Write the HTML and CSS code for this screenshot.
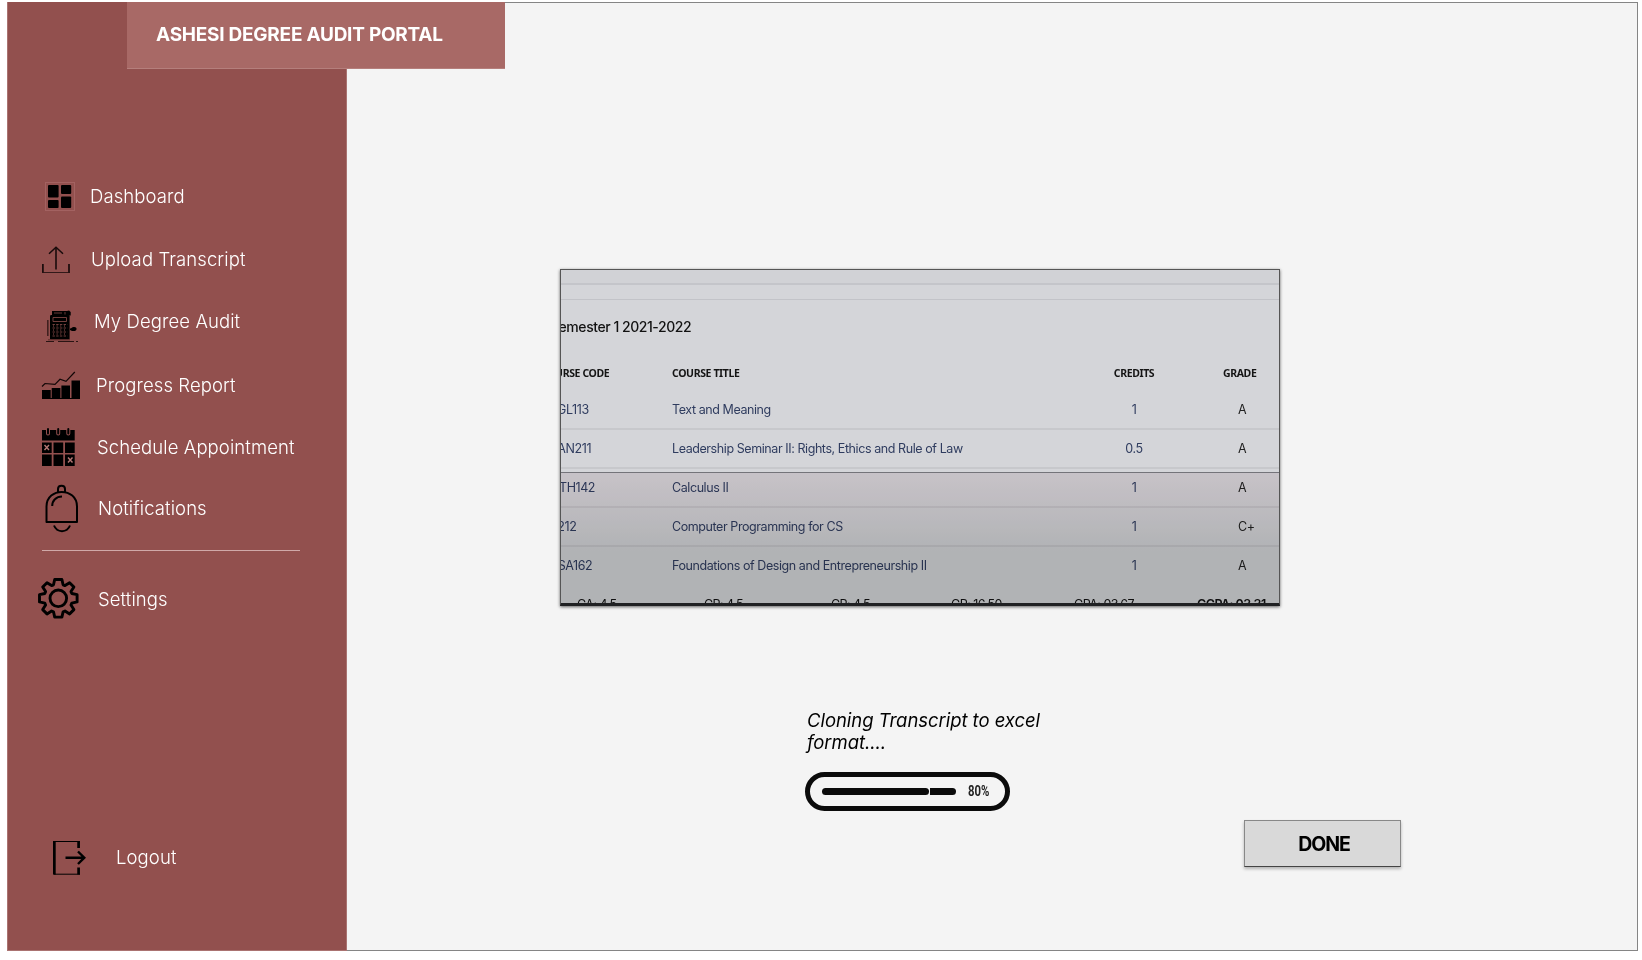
FILE: index.html
```html
<!DOCTYPE html>
<html lang="en">
<head>
<meta charset="utf-8">
<title>Ashesi Degree Audit Portal</title>
<link rel="stylesheet" href="styles.css">
</head>
<body>
<div class="frame">
  <header class="banner">ASHESI DEGREE AUDIT PORTAL</header>
  <nav class="sidebar">
    <a class="item dashboard"><svg viewBox="7 165 83 62"><rect x="45.5" y="182.5" width="29" height="28" fill="none" stroke="#a36261"/><rect x="48" y="185" width="10.6" height="12.6" rx="1"/><rect x="61" y="185" width="10.2" height="9" rx="1"/><rect x="48" y="200" width="10.6" height="8" rx="1"/><rect x="61" y="196.6" width="10.2" height="11.4" rx="1"/></svg><span>Dashboard</span></a>
    <a class="item upload"><svg viewBox="7 227 84 63"><g fill="none" stroke="#190b0b"><path d="M42.9 264v8.5M69 264v8.5" stroke-width="1.7"/><path d="M42 272.5h28" stroke-width=".8"/><path d="M56 247.500v22" stroke-width="1.6"/><path d="m49 253.800 7-6.500 7 6.500" stroke-width="1.5"/></g></svg><span>Upload Transcript</span></a>
    <a class="item audit"><svg viewBox="7 290 87 62"><path d="M52 311h15l2-.5 1.700 1.500v3.500H52z"/><path d="M54 313h8M65 312v2.500" stroke="#92504e" stroke-width=".7"/><rect x="50" y="315" width="19.600" height="24.500" rx="1.200"/><g fill="none" stroke="#7d4543" stroke-width=".9"><path d="M53 317.500h13.500v4H53z"/><path d="M52.500 324.500h15M52.500 328h15M52.500 332h15M52.500 336h15" stroke-dasharray="2.400 1.300"/><path d="M53 326h14M53 330h14M53 334h14" stroke-dasharray=".8 2.900" stroke-width="1.500"/></g><path d="M47.800 320v16" stroke="#41201f" stroke-width="1.600"/><path d="M70 328.500c2 0 2-2 4-1.500 3-.3 3.500 3 1 4h-3l-2-1z"/><path d="M48 339.800h22" stroke="#63302f" stroke-width="1.200"/><path d="M46 341.500h8m4 0h16m2 0h2" stroke="#2a1413"/></svg><span>My Degree Audit</span></a>
    <a class="item progress-link"><svg viewBox="7 352 89 64"><path d="M42 390h8.700v8h1V388h8.700v10h1v-12.500H70V398h1.500v-17.500H80V399H42z"/><path d="m42 386.500 3-3 10 .8 5-5 6 2 8.800-9.300" fill="none" stroke="#120707" stroke-width="1.200"/></svg><span>Progress Report</span></a>
    <a class="item schedule"><svg viewBox="7 416 90 61"><path d="M42 430h32.700v10.500H42zM42 442.500h9.700V453H42zM53.500 442.500h9.700V453h-9.700zM65 442.500h9.700V453H65zM42 454.500h9.700V466H42zM53.500 454.500h9.700V466h-9.700zM65 454.500h9.700V466H65z"/><path d="M48 428v5.500M58.200 428v5.500M68.300 428v5.500" stroke="#92504e" stroke-width="4" stroke-linecap="round"/><path d="M48 429v4.500M58.200 429v4.500M68.300 429v4.500" stroke="#000" stroke-width="2" stroke-linecap="round"/><path d="m44.500 445 4.500 5m0-5-4.500 5M68 457.500l4.500 5m0-5-4.500 5" stroke="#b57875" stroke-width="1.400"/></svg><span>Schedule Appointment</span></a>
    <a class="item notify"><svg viewBox="7 477 91 62"><g fill="none" stroke="#000" stroke-width="2"><path d="M46.500 522v-15.500c0-19.500 30.500-19.500 30.500 0V522z" stroke-linejoin="round"/><path d="M58 492v-3c0-4.500 7-4.500 7 0v3M52.200 506c0-5.500 4-9.500 9.800-9.500M54 525.500c3 7.500 13 7.500 16 0"/></g></svg><span>Notifications</span></a>
    <hr class="rule">
    <a class="item settings"><svg viewBox="7 568 91 60"><g transform="translate(58.300 598.300)" fill="none" stroke="#000" stroke-width="2.900" stroke-linejoin="round"><circle r="8.300"/><path d="M-3.600-18.800H3.600L4.800-13.500L6.700-12.700L11.300-15.600L15.600-11.300L12.700-6.700L13.500-4.800L18.800-3.600V3.600L13.500 4.800L12.700 6.700L15.600 11.300L11.300 15.600L6.700 12.700L4.800 13.500L3.600 18.800H-3.600L-4.800 13.500L-6.700 12.700L-11.300 15.600L-15.600 11.300L-12.700 6.700L-13.500 4.800L-18.800 3.600V-3.600L-13.500-4.800L-12.700-6.700L-15.600-11.300L-11.300-15.600L-6.700-12.700L-4.800-13.500Z"/></g></svg><span>Settings</span></a>
    <a class="item logout"><svg viewBox="7 826 109 60"><path d="M53 840h2.700v33.600H53z"/><g fill="none" stroke="#000"><path d="M54 840.500h26M54 873.200h26" stroke-width="1"/><path d="M78.600 840v7M78.600 866.500v7" stroke-width="2.700"/><path d="M65.500 856.700H84M78 850.500l6.300 6.200-6.300 6.300" stroke-width="2.400"/></g></svg><span>Logout</span></a>
  </nav>
  <main class="content">
    <section class="transcript">
      <div class="sheet">
        <div class="strip"></div>
        <div class="strip second"></div>
        <h2 class="term">Semester 1 2021-2022</h2>
        <div class="row head"><span>COURSE CODE</span><span>COURSE TITLE</span><span class="num">CREDITS</span><span class="gh">GRADE</span></div>
        <div class="row"><span>ENGL113</span><span>Text and Meaning</span><span class="num">1</span><span class="grade">A</span></div>
        <div class="row"><span>SOAN211</span><span>Leadership Seminar II: Rights, Ethics and Rule of Law</span><span class="num">0.5</span><span class="grade">A</span></div>
        <div class="row"><span>MATH142</span><span>Calculus II</span><span class="num">1</span><span class="grade">A</span></div>
        <div class="row"><span>CS212</span><span>Computer Programming for CS</span><span class="num">1</span><span class="grade">C+</span></div>
        <div class="row last"><span>BUSA162</span><span>Foundations of Design and Entrepreneurship II</span><span class="num">1</span><span class="grade">A</span></div>
        <div class="totals"><span>CA: 4.5</span><span>CP: 4.5</span><span>CP: 4.5</span><span>GP: 16.50</span><span>GPA: 03.67</span><b>CGPA: 03.31</b></div>
      </div>
      <div class="scan"></div>
    </section>
    <p class="status">Cloning Transcript to excel<br>format....</p>
    <div class="meter"><i class="done-part"></i><i class="rest-part"></i><span class="pct">80%</span></div>
    <button class="done">DONE</button>
  </main>
</div>
</body>
</html>
```
FILE: styles.css
```css
* { box-sizing: border-box; }
body { margin: 0; background: #fff; font-family: Inter, "Liberation Sans", sans-serif; }
.frame {
  position: relative;
  display: flex;
  width: 1631px;
  height: 949px;
  margin: 2px 0 0 7px;
  background: #f4f4f4;
  border: 1px solid #858585;
  border-left: 0;
}
.banner {
  position: absolute;
  left: 120px;
  top: -1px;
  width: 378px;
  height: 67px;
  padding-left: 29px;
  background: #a86966;
  border-bottom: 1px solid #b57f7c;
  color: #fff;
  font-size: 19px;
  font-weight: 700;
  letter-spacing: -0.25px;
  line-height: 65px;
  white-space: nowrap;
}
.sidebar {
  display: flex;
  flex-direction: column;
  width: 340px;
  height: 949px;
  margin-top: -1px;
  padding-top: 163px;
  background: #92504e;
  border: 1px solid #aa7371;
  border-width: 0 1px 1px;
}
.item {
  display: flex;
  align-items: center;
  margin-left: -1px;
  color: #fff;
  font-size: 18.5px;
  font-weight: 300;
  letter-spacing: 0.1px;
  white-space: nowrap;
}
.item svg { display: block; flex: none; height: 100%; }
.dashboard { height: 62px; }
.dashboard svg { width: 83px; }
.upload { height: 63px; }
.upload svg { width: 84px; }
.audit { height: 62px; }
.audit svg { width: 87px; }
.progress-link { height: 64px; }
.progress-link svg { width: 89px; }
.schedule { height: 61px; }
.schedule svg { width: 90px; }
.notify { height: 62px; }
.notify svg { width: 91px; }
.progress-link span, .settings span { padding-top: 2px; }
.rule {
  width: 258px;
  height: 1px;
  margin: 11px 0 17px 34px;
  border: 0;
  background: #d0a9a8;
}
.settings { height: 60px; }
.settings svg { width: 91px; }
.logout { height: 60px; margin-top: 199px; }
.logout svg { width: 109px; }

.content { flex: 1; padding: 266px 0 0 213px; }
.transcript {
  position: relative;
  width: 720px;
  height: 337px;
  overflow: hidden;
  background: #d4d5d9;
  border: 1px solid #555;
  border-bottom: 3px solid #202123;
  box-shadow: 0 1px 3px #0009;
}
.sheet { width: 738px; margin-left: -20px; color: #2f3c5f; }
.strip { height: 15px; background: #d1d2d6; border-bottom: 2px solid #c4c5ca; }
.strip.second { height: 15px; background: none; border-bottom: 1px solid #c2c3c8; }
.term {
  height: 54px;
  margin: 0;
  padding-left: 9px;
  color: #111;
  font-size: 14px;
  font-weight: 500;
  letter-spacing: -0.45px;
  line-height: 54px;
}
.row {
  display: grid;
  grid-template-columns: 131px 402px 120px 85px;
  align-items: center;
  height: 39px;
  border-bottom: 2px solid #c7c8cc;
  font-size: 12.5px;
  letter-spacing: -0.42px;
  white-space: nowrap;
}
.row.last { border-color: transparent; }
.row.head {
  height: 37px;
  border: 0;
  color: #151515;
  font: 700 10.5px "Noto Sans", sans-serif;
  letter-spacing: -0.38px;
}
.num { text-align: center; }
.grade { padding-left: 44px; color: #222; }
.gh { padding-left: 29px; }
.totals {
  display: grid;
  grid-template-columns: 127px 127px 120px 123px 123px 90px;
  padding: 10px 0 0 36px;
  color: #111;
  font-size: 12.5px;
  letter-spacing: -0.55px;
  line-height: 18px;
  white-space: nowrap;
}
.totals b { font-weight: 600; }
.scan {
  position: absolute;
  inset: 202px 0 0;
  border-top: 1px solid #8c8b8f;
  background: linear-gradient(#f0e9eb, #d5d6d5 60%, #d5d6d5);
  mix-blend-mode: multiply;
}
.status {
  margin: 103px 0 0 247px;
  color: #000;
  font-size: 18.5px;
  font-style: italic;
  letter-spacing: -0.05px;
  line-height: 22px;
}
.meter {
  display: flex;
  align-items: center;
  width: 205px;
  height: 39px;
  margin: 19px 0 0 245px;
  padding-left: 12px;
  border: 5px solid #0b0b0b;
  border-radius: 20px;
}
.done-part, .rest-part { height: 7px; background: #0b0b0b; }
.done-part { width: 107px; border-radius: 4px; }
.rest-part { width: 26px; margin-left: 1px; border-radius: 0 4px 4px 0; }
.pct {
  width: 21px;
  margin-left: 12px;
  color: #222;
  font: 700 14.5px Roboto, sans-serif;
  transform: scaleX(.78);
  transform-origin: left;
}
.done {
  display: block;
  width: 157px;
  height: 47px;
  margin: 9px 0 0 684px;
  padding: 0 0 0 3px;
  background: #d9d9d9;
  border: 1px solid #888;
  border-bottom-color: #444;
  box-shadow: 0 2px 3px #0004;
  color: #000;
  font: 700 19.5px Inter, sans-serif;
  letter-spacing: -1.1px;
}
```
